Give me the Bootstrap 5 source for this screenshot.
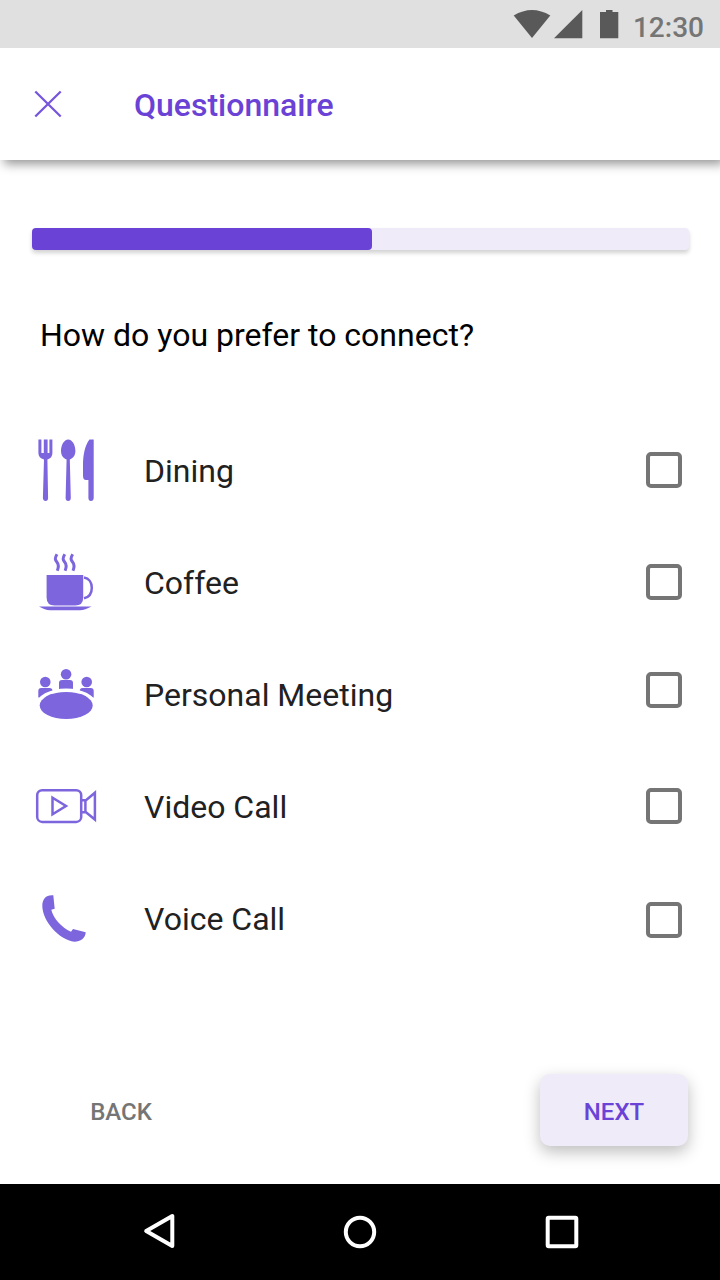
<!DOCTYPE html>
<html lang="en">
<head>
<meta charset="utf-8">
<meta name="viewport" content="width=device-width, initial-scale=1">
<title>Questionnaire</title>
<link href="https://cdn.jsdelivr.net/npm/bootstrap@5.3.0/dist/css/bootstrap.min.css" rel="stylesheet">
<style>
  :root { --violet: #6a42d6; --icon: #7d65de; --tint: #efebf9; }
  body { font-family: Roboto, "Liberation Sans", sans-serif; font-size: 32px; line-height: 40px; color: #212121; background: #fff; }
  .screen { width: 720px; height: 1280px; }
  .status { height: 48px; background: #e0e0e0; color: #757575; z-index: 1; }
  .clock { font-size: 28px; font-weight: 500; line-height: 34px; padding: 11px 16px 0 13px; }
  .appbar { height: 112px; box-shadow: 4px 4px 10px rgba(0,0,0,.42); }
  .title { color: var(--violet); font-size: 32px; font-weight: 500; line-height: 40px; margin: 2px 0 0 70px; }
  .steps { height: 22px; margin: 68px 31px 0 32px; border-radius: 4px; background: var(--tint); box-shadow: 0 3px 4px rgba(0,0,0,.18); overflow: visible; }
  .steps .progress-bar { background: var(--violet); border-radius: 4px; }
  .question { font-size: 32px; font-weight: 400; line-height: 40px; color: #000; margin: 65px 40px 0; }
  .options { margin-top: 60px; }
  .option { height: 112px; padding: 0 38px 0 32px; }
  .option svg { width: 72px; height: 112px; fill: var(--icon); }
  .option label { padding-left: 40px; }
  .option .form-check-input { width: 36px; height: 36px; border: 4px solid #757575; border-radius: 5px; margin: 0 0 2px; }
  .option .raised { margin-bottom: 10px; }
  .option .lowered { margin: 2px 0 0; }
  .actions { margin: 99px 32px 0; }
  .actions .btn { height: 72px; font-size: 24px; font-weight: 500; line-height: 28px; padding-top: 10px; border: 0; border-radius: 10px; }
  .back { width: 178px; color: #757575; }
  .next { width: 148px; color: var(--violet); background: var(--tint); box-shadow: 0 6px 16px rgba(0,0,0,.26); }
  .sysbar { height: 96px; background: #000; }
</style>
</head>
<body>
<div class="screen d-flex flex-column overflow-hidden">
  <div class="status position-relative d-flex justify-content-end flex-shrink-0">
    <svg width="108" height="48" viewBox="512 0 108 48" fill="#595959"><path d="M513.700 15.500Q532 4.500 550.300 15.500L532 38Z"/><path d="M554 38.300L582.300 10V38.300Z"/><path d="M600 12H606V10H612.500V12H618.300V38.300H600Z"/></svg>
    <span class="clock">12:30</span>
  </div>
  <header class="appbar d-flex align-items-center flex-shrink-0 bg-white">
    <svg width="64" height="64" viewBox="0 0 64 64" fill="none" stroke="#7656dc" stroke-width="2.300"><path d="M35.300 19.500L60.700 44.500M60.700 19.500L35.300 44.500"/></svg>
    <h1 class="title">Questionnaire</h1>
  </header>
  <main class="flex-grow-1">
    <div class="progress steps" role="progressbar" aria-valuenow="52" aria-valuemin="0" aria-valuemax="100"><div class="progress-bar" style="width:51.750%"></div></div>
    <h2 class="question">How do you prefer to connect?</h2>
    <div class="options">
      <div class="option d-flex align-items-center">
        <svg viewBox="32 415 72 112"><path d="M38.400 439.500h3V453h2.400V439.500h3.800V453h1.800V439.500h3V453q0 5-5 6.500L48.100 498q-.1 3-2.500 3t-2.700-3L44 459.500q-5.600-1.500-5.600-6.500ZM68.200 439.500c4.200 0 7.200 5.800 7.200 11.500 0 4.500-2.500 7.500-5.600 8.400L70.800 498q-.1 3-2.600 3t-2.600-3l1-38.600c-3.100-.9-5.600-3.900-5.600-8.400 0-5.700 3-11.500 7.200-11.500ZM93.700 439.500V498q-.2 3-2.700 3t-2.600-3V480H86q-3 0-3-4.500V465c0-10 2-20 6.500-25.500Z"/></svg>
        <label for="dining" class="flex-grow-1">Dining</label><input class="form-check-input" type="checkbox" id="dining">
      </div>
      <div class="option d-flex align-items-center">
        <svg viewBox="32 527 72 112"><path d="M46.600 575H83.200V597.500q0 8-8 8H54.600q-8 0-8-8ZM39 606.600H91.500Q85 610.300 80 610.300H50Q45 610.300 39 606.600Z"/><path d="M84 577.500c5 .8 7.800 5 7.800 10.300S89 597.300 84 598.300" fill="none" stroke="#7d65de" stroke-width="2.500"/><path d="M57 554.200c-2.500 4-2 5.600 0 8s2 4.300.3 8.600M64.800 554.200c-2.500 4-2 5.600 0 8s2 4.300.3 8.600M72.700 554.200c-2.500 4-2 5.600 0 8s2 4.300.3 8.600" fill="none" stroke="#7d65de" stroke-width="3"/></svg>
        <label for="coffee" class="flex-grow-1">Coffee</label><input class="form-check-input" type="checkbox" id="coffee">
      </div>
      <div class="option d-flex align-items-center">
        <svg viewBox="32 639 72 112"><circle cx="66.100" cy="674.300" r="5.300"/><circle cx="45.300" cy="682" r="5.300"/><circle cx="86.700" cy="682" r="5.300"/><path d="M59 689V683q0-3 3-3H70q3 0 3 3V689ZM38.300 697.500V691q0-3 3-3H49.500q3 0 3 3V697.500ZM79.700 697.500V691q0-3 3-3H90.700q3 0 3 3V697.500Z"/><ellipse cx="66.200" cy="705.500" rx="28.200" ry="15.400" fill="none" stroke="#fff" stroke-width="3.400"/><ellipse cx="66.200" cy="705.500" rx="26.500" ry="13.600"/></svg>
        <label for="meeting" class="flex-grow-1">Personal Meeting</label><input class="form-check-input raised" type="checkbox" id="meeting">
      </div>
      <div class="option d-flex align-items-center">
        <svg viewBox="32 751 72 112"><g style="fill:none;stroke:#7d65de;stroke-width:2.500"><rect x="37.200" y="790.200" width="44" height="31.700" rx="5"/><path d="M52.500 797.800V814.300L66 806ZM82 800.300H86L94.900 792.800V819.500L86 812.200H82M85.400 800.300V812.200"/></g></svg>
        <label for="video" class="flex-grow-1">Video Call</label><input class="form-check-input" type="checkbox" id="video">
      </div>
      <div class="option d-flex align-items-center">
        <svg viewBox="32 863 72 112"><path d="M53.300 895.300L54.700 908.700L51.300 909.800C53 918 61.500 927.500 71 931.800L73 929L85.700 932.200C85.500 938 80.500 941.700 74.500 941.700C59 940 42.300 921 42.300 905.500C42.500 898.500 46.500 894.500 53.300 895.300Z"/></svg>
        <label for="voice" class="flex-grow-1">Voice Call</label><input class="form-check-input lowered" type="checkbox" id="voice">
      </div>
    </div>
    <div class="actions d-flex justify-content-between">
      <button class="btn back" type="button">BACK</button>
      <button class="btn next" type="button">NEXT</button>
    </div>
  </main>
  <nav class="sysbar flex-shrink-0">
    <svg class="d-block" width="720" height="96" viewBox="0 0 720 96" fill="none" stroke="#fff" stroke-width="4" stroke-linejoin="round"><path d="M146.200 47L172.300 32V62Z"/><circle cx="360" cy="48" r="14.200"/><rect x="547.700" y="33.800" width="28.600" height="28.400" rx="1"/></svg>
  </nav>
</div>
<script src="https://cdn.jsdelivr.net/npm/bootstrap@5.3.0/dist/js/bootstrap.bundle.min.js"></script>
</body>
</html>
